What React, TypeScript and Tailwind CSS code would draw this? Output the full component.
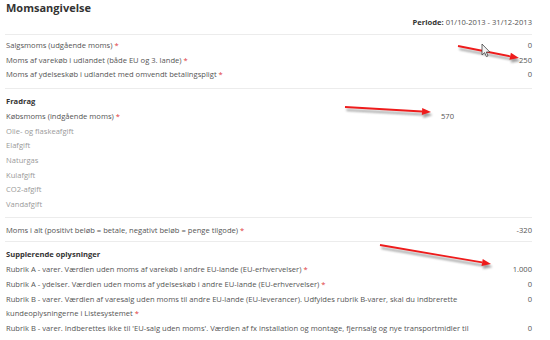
import React from "react";

type Row = { label: string; value?: string; req?: boolean; muted?: boolean; valuePad?: boolean };

const top: Row[] = [
  { label: "Salgsmoms (udgående moms)", value: "0", req: true },
  { label: "Moms af varekøb i udlandet (både EU og 3. lande)", value: "250", req: true },
  { label: "Moms af ydelseskøb i udlandet med omvendt betalingspligt", value: "0", req: true },
];

const fradrag: Row[] = [
  { label: "Købsmoms (indgående moms)", value: "570", req: true, valuePad: true },
  { label: "Olie- og flaskeafgift", muted: true },
  { label: "Elafgift", muted: true },
  { label: "Naturgas", muted: true },
  { label: "Kulafgift", muted: true },
  { label: "CO2-afgift", muted: true },
  { label: "Vandafgift", muted: true },
];

function Star() {
  return <span className="text-[#e0393e]"> *</span>;
}

function Line({ row }: { row: Row }) {
  return (
    <div className="flex justify-between leading-[14.7px]">
      <span className={row.muted ? "text-[#9a9a9a]" : "text-[#555]"}>
        {row.label}
        {row.req && <Star />}
      </span>
      {row.value && (
        <span className={row.valuePad ? "text-[#555] pr-[78px]" : "text-[#555]"}>{row.value}</span>
      )}
    </div>
  );
}

function Arrow({ x1, y1, x2, y2 }: { x1: number; y1: number; x2: number; y2: number }) {
  const a = Math.atan2(y2 - y1, x2 - x1);
  const len = 9;
  const w = 3.5;
  const bx = x2 - Math.cos(a) * len;
  const by = y2 - Math.sin(a) * len;
  const px = -Math.sin(a) * w;
  const py = Math.cos(a) * w;
  const head = `${x2},${y2} ${bx + px},${by + py} ${bx - px},${by - py}`;
  return (
    <g>
      <g filter="url(#blur)" opacity="0.55" transform="translate(1.5 3)">
        <line x1={x1} y1={y1} x2={bx} y2={by} stroke="#555" strokeWidth="2.2" />
        <polygon points={head} fill="#555" />
      </g>
      <line x1={x1} y1={y1} x2={bx} y2={by} stroke="#ee1c1c" strokeWidth="1.8" />
      <polygon points={head} fill="#ee1c1c" />
    </g>
  );
}

export default function App() {
  return (
    <div
      className="relative w-[550px] h-[340px] overflow-hidden bg-white text-[7.6px]"
      style={{ fontFamily: '"Open Sans", sans-serif' }}
    >
      <div className="ml-[5px] w-[527px]">
        {/* Header */}
        <div className="pb-[4px] border-b border-[#ececec]">
          <h1 className="pl-px pt-px text-[11px] font-bold leading-[14px] text-[#333]">Momsangivelse</h1>
          <div className="text-right leading-[15px] text-[#555]">
            <span className="font-bold text-[#333]">Periode:</span> 01/10-2013 - 31/12-2013
          </div>
        </div>

        <div className="pt-[3px] pb-[6px] border-b border-[#ececec] pl-px">
          {top.map((r) => (
            <Line key={r.label} row={r} />
          ))}
        </div>

        <div className="pt-[5px] pb-[5px] border-b border-[#ececec] pl-px">
          <div className="font-bold text-[#333] leading-[14.7px]">Fradrag</div>
          {fradrag.map((r) => (
            <Line key={r.label} row={r} />
          ))}
        </div>

        <div className="pt-[5px] pb-[4px] border-b border-[#ececec] pl-px">
          <Line row={{ label: "Moms i alt (positivt beløb = betale, negativt beløb = penge tilgode)", value: "-320", req: true }} />
        </div>

        <div className="pt-[5px] pl-px">
          <div className="font-bold text-[#333] leading-[14.7px]">Supplerende oplysninger</div>
          <Line row={{ label: "Rubrik A - varer. Værdien uden moms af varekøb i andre EU-lande (EU-erhvervelser)", value: "1.000", req: true }} />
          <Line row={{ label: "Rubrik A - ydelser. Værdien uden moms af ydelseskøb i andre EU-lande (EU-erhvervelser)", value: "0", req: true }} />
          <div className="flex justify-between leading-[14.7px] text-[#555]">
            <span>
              Rubrik B - varer. Værdien af varesalg uden moms til andre EU-lande (EU-leverancer). Udfyldes rubrik B-varer, skal du indbrerette
              <br />
              kundeoplysningerne i Listesystemet
              <Star />
            </span>
            <span>0</span>
          </div>
          <div className="flex justify-between leading-[14.7px] text-[#555]">
            <span>
              Rubrik B - varer. Indberettes ikke til 'EU-salg uden moms'. Værdien af fx installation og montage, fjernsalg og nye transportmidler til
              <br />
              ikke momsregistrerede kunder uden moms til andre EU-lande
              <Star />
            </span>
            <span>0</span>
          </div>
        </div>
      </div>

      {/* annotations */}
      <svg className="absolute left-0 top-0" width="550" height="340" viewBox="0 0 550 340">
        <defs>
          <filter id="blur" x="-20%" y="-50%" width="140%" height="200%">
            <feGaussianBlur stdDeviation="1.2" />
          </filter>
        </defs>
        <Arrow x1={458} y1={46} x2={519} y2={58} />
        <Arrow x1={345} y1={107} x2={431} y2={112} />
        <Arrow x1={380} y1={245} x2={491} y2={264} />
        <path
          d="M482 44 L482 55 L484.6 52.6 L486.4 56.6 L488 55.9 L486.3 52 L489.8 52 Z"
          fill="#f2f2f2"
          stroke="#444"
          strokeWidth="0.8"
          strokeLinejoin="round"
        />
      </svg>
    </div>
  );
}
